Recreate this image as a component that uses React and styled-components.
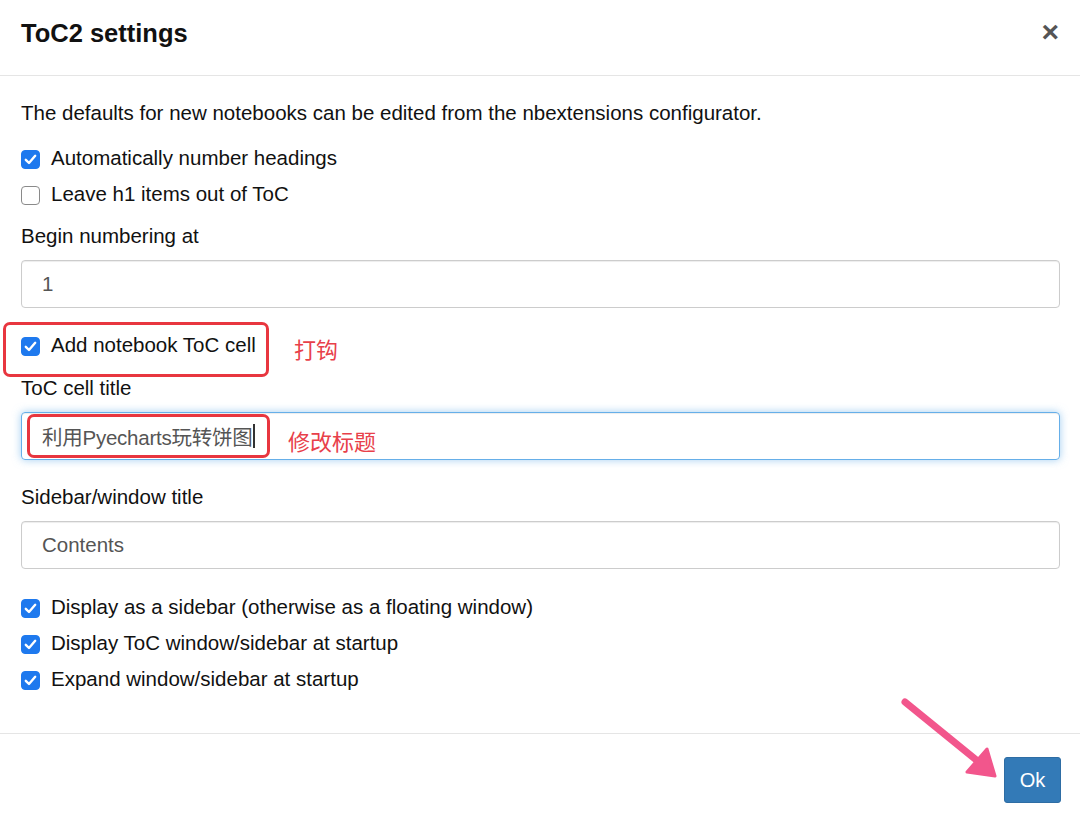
import styled, { createGlobalStyle } from "styled-components";

const GlobalStyle = createGlobalStyle`
  html, body {
    margin: 0;
    padding: 0;
    background: #ffffff;
  }
  body {
    font-family: "Liberation Sans", "Noto Sans CJK SC", Arial, sans-serif;
    color: #111;
  }
  * {
    box-sizing: border-box;
  }
`;

const checkboxes = {
  top: [
    { label: "Automatically number headings", checked: true },
    { label: "Leave h1 items out of ToC", checked: false },
  ],
  bottom: [
    { label: "Display as a sidebar (otherwise as a floating window)", checked: true },
    { label: "Display ToC window/sidebar at startup", checked: true },
    { label: "Expand window/sidebar at startup", checked: true },
  ],
};

function CheckBox({ checked }) {
  return (
    <StyledBox $checked={checked}>
      {checked && (
        <svg width="13" height="11" viewBox="0 0 13 11">
          <path
            d="M1.8 5.8 L5 9 L11.2 1.8"
            fill="none"
            stroke="#fff"
            strokeWidth="2.4"
            strokeLinecap="round"
            strokeLinejoin="round"
          />
        </svg>
      )}
    </StyledBox>
  );
}

function CheckRow({ label, checked, children }) {
  return (
    <StyledCheckRow>
      <CheckBox checked={checked} />
      <StyledCheckLabel>{label}</StyledCheckLabel>
      {children}
    </StyledCheckRow>
  );
}

export default function App() {
  return (
    <>
      <GlobalStyle />
      <StyledDialog>
        <StyledHeader>
          <StyledTitle>ToC2 settings</StyledTitle>
          <StyledClose>×</StyledClose>
        </StyledHeader>

        <StyledBody>
          <StyledIntro>
            The defaults for new notebooks can be edited from the nbextensions configurator.
          </StyledIntro>

          <StyledGroup $after={11}>
            {checkboxes.top.map((c) => (
              <CheckRow key={c.label} label={c.label} checked={c.checked} />
            ))}
          </StyledGroup>

          <StyledFormGroup $after={18}>
            <StyledLabel>Begin numbering at</StyledLabel>
            <StyledField>1</StyledField>
          </StyledFormGroup>

          <StyledGroup $after={12}>
            <CheckRow label="Add notebook ToC cell" checked>
              <StyledMarkBox $left={-18} $top={-4} $width={266} $height={55} />
              <StyledNote $left={273} $top={7}>打钩</StyledNote>
            </CheckRow>
          </StyledGroup>

          <StyledFormGroup $after={23}>
            <StyledLabel>ToC cell title</StyledLabel>
            <StyledField $focused>
              <StyledTitleValue>利用Pyecharts玩转饼图</StyledTitleValue>
              <StyledCaret />
              <StyledMarkBox $left={5} $top={1} $width={243} $height={44} />
              <StyledNote $left={266} $top={12}>修改标题</StyledNote>
            </StyledField>
          </StyledFormGroup>

          <StyledFormGroup $after={19}>
            <StyledLabel>Sidebar/window title</StyledLabel>
            <StyledField>Contents</StyledField>
          </StyledFormGroup>

          <StyledGroup $after={37}>
            {checkboxes.bottom.map((c) => (
              <CheckRow key={c.label} label={c.label} checked={c.checked} />
            ))}
          </StyledGroup>
        </StyledBody>

        <StyledFooter>
          <StyledArrow width="110" height="90" viewBox="0 0 110 90">
            <line
              x1="5"
              y1="5"
              x2="80"
              y2="66"
              stroke="#f2568c"
              strokeWidth="7"
              strokeLinecap="round"
            />
            <polygon
              points="95,79 67,75 87,52"
              fill="#f2568c"
              stroke="#f2568c"
              strokeWidth="3"
              strokeLinejoin="round"
            />
          </StyledArrow>
          <StyledButton>Ok</StyledButton>
        </StyledFooter>
      </StyledDialog>
    </>
  );
}

const StyledDialog = styled.div`
  width: 1080px;
  height: 824px;
  display: flex;
  flex-direction: column;
  background: #fff;
  overflow: hidden;
`;

const StyledHeader = styled.div`
  height: 76px;
  display: flex;
  align-items: flex-start;
  justify-content: space-between;
  padding: 19px 20px 0 21px;
  border-bottom: 1px solid #e5e5e5;
`;

const StyledTitle = styled.h4`
  margin: 0;
  font-size: 25.5px;
  line-height: 29px;
  font-weight: 700;
  color: #111;
`;

const StyledClose = styled.span`
  font-size: 30px;
  line-height: 30px;
  font-weight: 700;
  color: #555;
  margin-top: -2px;
  margin-right: 1px;
`;

const StyledBody = styled.div`
  display: flex;
  flex-direction: column;
  padding: 23px 20px 0 21px;
`;

const StyledIntro = styled.p`
  margin: 0 0 13px 0;
  font-size: 20.5px;
  line-height: 27px;
  color: #111;
`;

const StyledGroup = styled.div`
  display: flex;
  flex-direction: column;
  margin-bottom: ${(p) => p.$after || 0}px;
`;

const StyledCheckRow = styled.div`
  position: relative;
  height: 36px;
  display: flex;
  align-items: center;
  gap: 11px;
`;

const StyledBox = styled.span`
  width: 19px;
  height: 19px;
  margin-top: 4px;
  flex-shrink: 0;
  border-radius: 4px;
  display: flex;
  align-items: center;
  justify-content: center;
  background: ${(p) => (p.$checked ? "#1e79ee" : "#fff")};
  border: 1px solid ${(p) => (p.$checked ? "#1e79ee" : "#8a8a8a")};
`;

const StyledCheckLabel = styled.span`
  font-size: 20.5px;
  line-height: 27px;
  color: #111;
`;

const StyledFormGroup = styled.div`
  display: flex;
  flex-direction: column;
  margin-bottom: ${(p) => p.$after || 0}px;
`;

const StyledLabel = styled.label`
  font-size: 20.5px;
  line-height: 27px;
  color: #111;
  margin-bottom: 11px;
`;

const StyledField = styled.div`
  position: relative;
  height: 48px;
  display: flex;
  align-items: center;
  padding: 0 20px;
  font-size: 20.5px;
  color: #555;
  border-radius: 4px;
  border: 1px solid ${(p) => (p.$focused ? "#66afe9" : "#cccccc")};
  box-shadow: ${(p) =>
    p.$focused
      ? "inset 0 1px 1px rgba(0,0,0,.075), 0 0 8px rgba(102,175,233,.6)"
      : "inset 0 1px 1px rgba(0,0,0,.075)"};
`;

const StyledTitleValue = styled.span`
  letter-spacing: -0.25px;
`;

const StyledCaret = styled.span`
  width: 1.5px;
  height: 24px;
  margin-left: 1px;
  background: #333;
`;

const StyledMarkBox = styled.span`
  position: absolute;
  left: ${(p) => p.$left}px;
  top: ${(p) => p.$top}px;
  width: ${(p) => p.$width}px;
  height: ${(p) => p.$height}px;
  border: 3px solid #e8363f;
  border-radius: 7px;
  pointer-events: none;
`;

const StyledNote = styled.span`
  position: absolute;
  left: ${(p) => p.$left}px;
  top: ${(p) => p.$top}px;
  font-family: "Noto Sans CJK SC", sans-serif;
  font-size: 22px;
  line-height: 30px;
  color: #e8404a;
  white-space: nowrap;
`;

const StyledFooter = styled.div`
  position: relative;
  flex: 1;
  display: flex;
  justify-content: flex-end;
  align-items: flex-start;
  padding: 23px 19px 0 0;
  border-top: 1px solid #e5e5e5;
`;

const StyledArrow = styled.svg`
  position: absolute;
  left: 900px;
  top: -37px;
  overflow: visible;
`;

const StyledButton = styled.button`
  width: 57px;
  height: 46px;
  padding: 0;
  font-family: "Liberation Sans", Arial, sans-serif;
  font-size: 20px;
  color: #fff;
  background: #337ab7;
  border: 1px solid #2e6da4;
  border-radius: 3px;
`;
